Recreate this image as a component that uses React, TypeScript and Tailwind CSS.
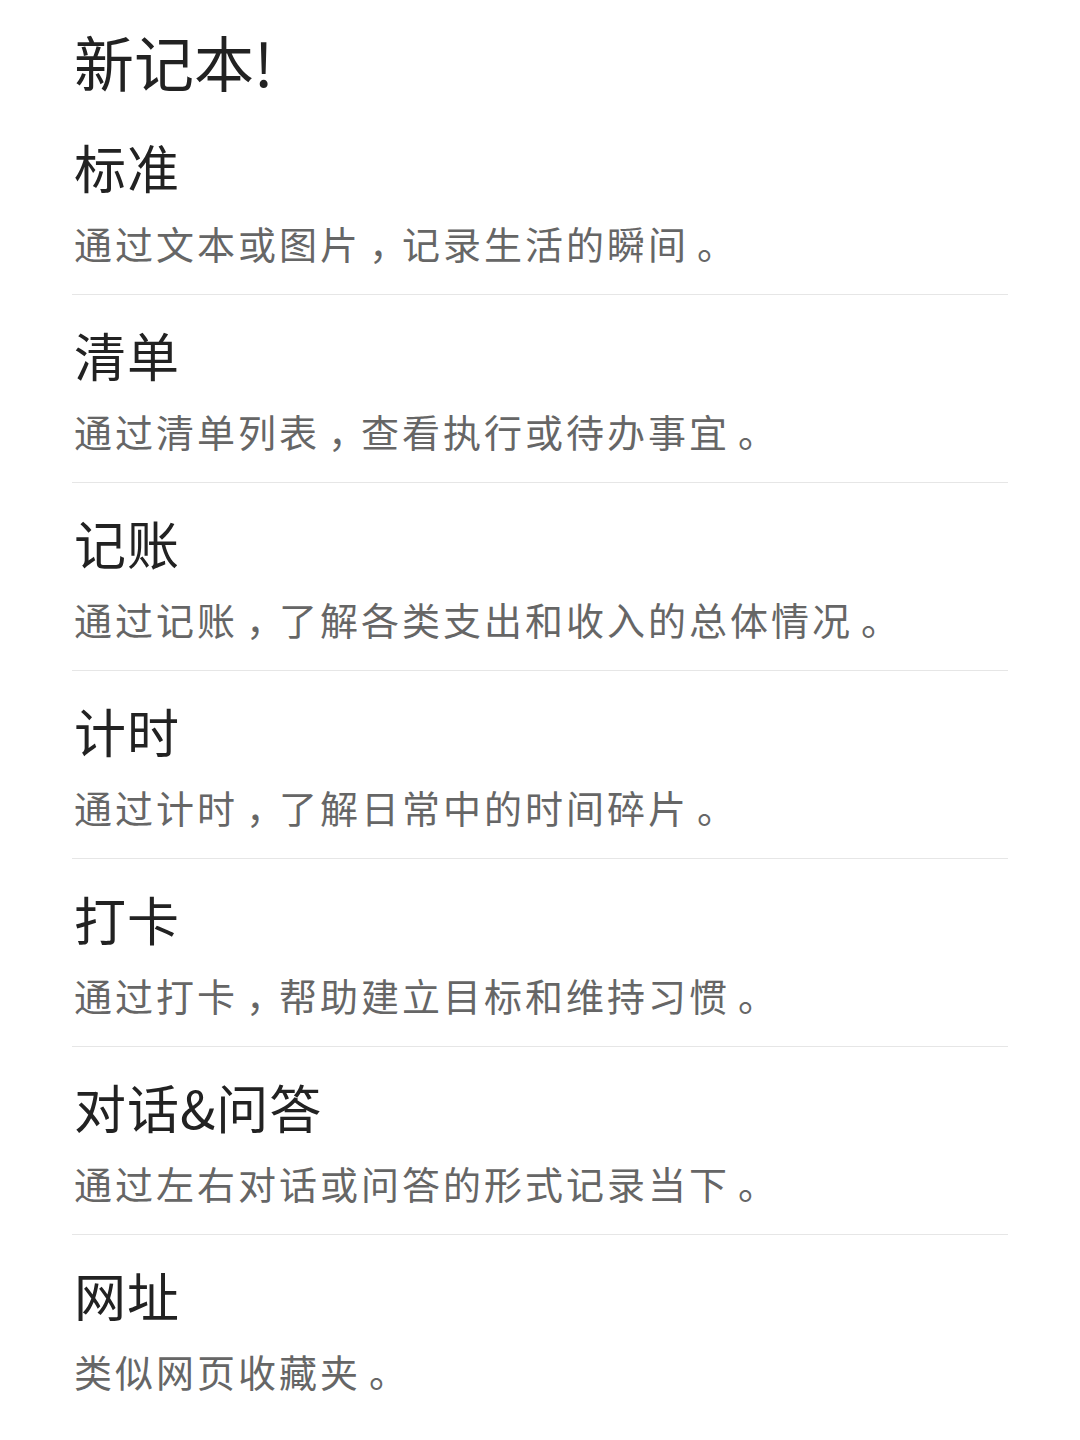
import React from 'react';

const notebooks = [
  { title: '标准', desc: '通过文本或图片，记录生活的瞬间。' },
  { title: '清单', desc: '通过清单列表，查看执行或待办事宜。' },
  { title: '记账', desc: '通过记账，了解各类支出和收入的总体情况。' },
  { title: '计时', desc: '通过计时，了解日常中的时间碎片。' },
  { title: '打卡', desc: '通过打卡，帮助建立目标和维持习惯。' },
  { title: '对话&问答', desc: '通过左右对话或问答的形式记录当下。' },
  { title: '网址', desc: '类似网页收藏夹。' },
];

// punctuation in the original sits on the baseline but centred across its cell:
// push the glyph right and give the space back through letter-spacing
const Desc: React.FC<{ text: string }> = ({ text }) => (
  <>
    {text.split(/([，。])/).map((part, i) =>
      part === '，' || part === '。' ? (
        <span key={i} className="pl-[8px] tracking-[-5px]">
          {part}
        </span>
      ) : (
        <span key={i}>{part}</span>
      )
    )}
  </>
);

const App: React.FC = () => {
  return (
    <div
      className="min-h-screen bg-white px-[72px] [text-spacing-trim:space-all]"
      style={{ fontFamily: '"Noto Sans CJK SC", "Noto Sans", sans-serif' }}
    >
      {/* Header */}
      <h1 className="pt-[21px] pl-[2px] text-[60px] leading-[80px] font-normal text-[#222222]">新记本!</h1>

      {/* Notebook types */}
      <ul className="mt-[6px]">
        {notebooks.map((item, i) => (
          <li
            key={item.title}
            className={`pt-[28px] pb-[25px] ${i < notebooks.length - 1 ? 'border-b border-[#e6e6e6]' : ''}`}
          >
            <div className="pl-[2px] text-[52px] leading-[64px] tracking-[1px] text-[#222222]">{item.title}</div>
            <div className="mt-[18px] pl-[2px] text-[38px] leading-[52px] tracking-[3px] text-[#666666]">
              <Desc text={item.desc} />
            </div>
          </li>
        ))}
      </ul>
    </div>
  );
};

export default App;
